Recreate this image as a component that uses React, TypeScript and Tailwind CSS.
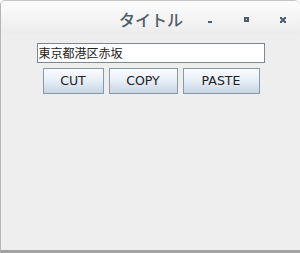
export default function App() {
  return (
    <div className="w-[300px] h-[253px] bg-white overflow-hidden">
      <div className="w-[300px] h-[253px] flex flex-col rounded-tl-[5px] rounded-tr-[6px] border-l border-t border-[#c4c4c4] border-l-[#b4b4b4] border-b-[3px] border-b-[#a2a2a2] bg-[#eeeeee] overflow-hidden">
        <div className="h-[33px] flex items-center bg-gradient-to-b from-[#fdfdfd] to-[#ececec] relative">
          <div className="absolute left-0 right-0 top-[6px] text-center pl-[1px] text-[16px] font-medium text-[#4f5d69]" style={{ fontFamily: '"Noto Sans CJK JP", sans-serif' }}>
            タイトル
          </div>
          <div className="absolute left-[207px] top-[20px] w-[4px] h-[2px] bg-[#4f5d69]" />
          <div className="absolute left-[243px] top-[16px] w-[5px] h-[5px] border-[2px] border-[#4f5d69]" />
          <svg className="absolute left-[279px] top-[16px]" width="6" height="6" viewBox="0 0 6 6">
            <path d="M0 0 L6 6 M6 0 L0 6" stroke="#4f5d69" strokeWidth="2" />
            <rect x="0" y="0" width="2" height="2" fill="#4f5d69" />
            <rect x="4" y="0" width="2" height="2" fill="#4f5d69" />
            <rect x="0" y="4" width="2" height="2" fill="#4f5d69" />
            <rect x="4" y="4" width="2" height="2" fill="#4f5d69" />
          </svg>
        </div>
        <div className="flex flex-col items-center pt-[9px]">
          <div className="w-[228px] h-[20px] border border-[#7e8892] bg-white flex items-center pl-[1px] text-[12px] text-[#222]" style={{ fontFamily: '"Noto Sans CJK JP", sans-serif' }}>
            東京都港区赤坂
          </div>
          <div className="flex gap-[5px] mt-[5px] ml-[1px]" style={{ fontFamily: '"DejaVu Sans", sans-serif' }}>
            {[
              ["CUT", "w-[61px]"],
              ["COPY", "w-[69px]"],
              ["PASTE", "w-[77px]"],
            ].map(([t, w]) => (
              <div key={t} className={`${w} h-[26px] flex items-center justify-center border border-[#8a98a8] bg-gradient-to-b from-[#fbfcfe] via-[#e6eef6] to-[#c6d6e6] text-[12.5px] text-[#222]`}>
                {t}
              </div>
            ))}
          </div>
        </div>
      </div>
    </div>
  );
}
